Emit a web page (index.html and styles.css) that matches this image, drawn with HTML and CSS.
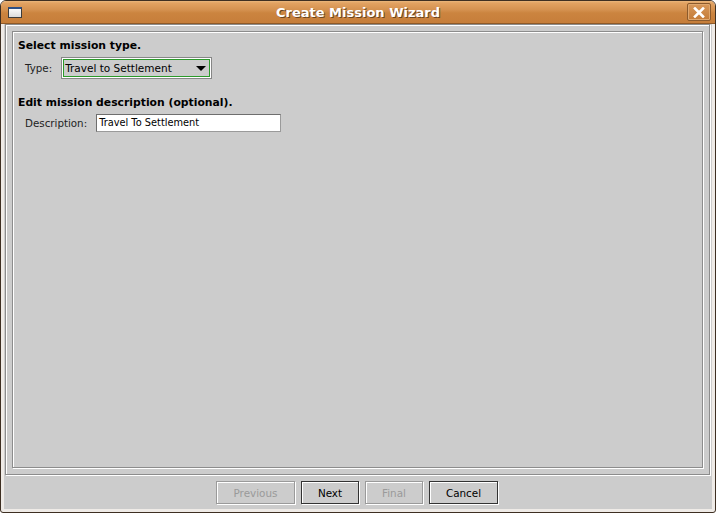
FILE: index.html
```html
<!DOCTYPE html>
<html>
<head>
<meta charset="utf-8">
<link rel="stylesheet" href="styles.css">
</head>
<body>
<div class="window">
  <div class="titlebar">
    <div class="winicon"></div>
    <div class="title">Create Mission Wizard</div>
    <div class="close">
      <svg width="12" height="11" viewBox="0 0 12 11"><path d="M2 1.5 L10 9.5 M10 1.5 L2 9.5" stroke="#ffffff" stroke-width="2.6" stroke-linecap="square"/></svg>
    </div>
  </div>
  <div class="frame">
    <div class="client">
      <div class="etched outer">
        <div class="etched inner">
          <div class="heading">Select mission type.</div>
          <div class="row row-type">
            <span class="label label-type">Type:</span>
            <div class="combo">
              <span class="combo-text">Travel to Settlement</span>
              <svg class="arrow" width="10" height="5" viewBox="0 0 10 5"><path d="M0 0 H10 L5 5 Z" fill="#000"/></svg>
            </div>
          </div>
          <div class="heading heading-2">Edit mission description (optional).</div>
          <div class="row row-desc">
            <span class="label label-desc">Description:</span>
            <div class="field">Travel To Settlement</div>
          </div>
        </div>
      </div>
      <div class="buttons">
        <div class="btn disabled btn-prev">Previous</div>
        <div class="btn btn-next">Next</div>
        <div class="btn disabled btn-final">Final</div>
        <div class="btn btn-cancel">Cancel</div>
      </div>
    </div>
  </div>
</div>
</body>
</html>
```
FILE: styles.css
```css
html, body {
  margin: 0;
  padding: 0;
  background: #ffffff;
}
body {
  width: 716px;
  height: 515px;
  overflow: hidden;
  font-family: "DejaVu Sans", "Liberation Sans", sans-serif;
}
.window {
  box-sizing: border-box;
  width: 716px;
  height: 513px;
  border: 1px solid #3e2f22;
  border-radius: 6px 6px 3px 3px;
  background: #efebe7;
  overflow: hidden;
  display: flex;
  flex-direction: column;
}
.titlebar {
  position: relative;
  height: 22px;
  flex: none;
  border-bottom: 1px solid #8f5a28;
  background: linear-gradient(to bottom, #eab77d 0px, #e2a262 2px, #d4914f 9px, #cb843f 12px, #c67e3a 22px);
  display: flex;
  align-items: center;
}
.winicon {
  box-sizing: border-box;
  width: 14px;
  height: 11px;
  margin-left: 7px;
  margin-top: 1px;
  border: 1px solid #3c3c3c;
  border-top: 2px solid #2c4f86;
  background: linear-gradient(to bottom, #fafafa, #dcdcdc);
}
.title {
  position: absolute;
  left: 0;
  right: 0;
  top: 0;
  height: 22px;
  line-height: 23px;
  text-align: center;
  color: #ffffff;
  font-weight: bold;
  font-size: 13px;
  text-shadow: 1px 1px 0 #6b4420;
}
.close {
  position: absolute;
  right: 4px;
  top: 2px;
  box-sizing: border-box;
  width: 24px;
  height: 18px;
  border: 1px solid #8b5a2c;
  border-radius: 2px;
  box-shadow: inset 0 0 0 1px #e0a86f;
  background: linear-gradient(to bottom, #d8985a, #c47c38);
  display: flex;
  align-items: center;
  justify-content: center;
}
.close svg {
  display: block;
}
.frame {
  flex: 1;
  display: flex;
  padding: 0 3px 3px 3px;
}
.client {
  flex: 1;
  background: #cccccc;
  display: flex;
  flex-direction: column;
}
.etched {
  box-sizing: border-box;
  border: 1px solid #8c8c8c;
  box-shadow: inset 1px 1px 0 #ffffff, 1px 1px 0 #ffffff;
}
.outer {
  flex: 1;
  margin: 0 2px 1px 1px;
  padding: 6px 5px 5px 6px;
  display: flex;
}
.inner {
  flex: 1;
  margin: 0 1px 1px 0;
  padding: 6px 5px 0 5px;
  display: flex;
  flex-direction: column;
  align-items: flex-start;
}
.heading {
  font-size: 10.8px;
  font-weight: bold;
  line-height: 15px;
  height: 15px;
  color: #000;
}
.heading-2 {
  margin-top: 16px;
}
.row {
  display: flex;
  align-items: center;
  padding-left: 6px;
}
.row-type {
  margin-top: 4px;
}
.row-desc {
  margin-top: 4px;
}
.label {
  font-size: 10.3px;
  color: #222;
}
.label-type {
  margin-left: 1px;
  margin-right: 9px;
}
.label-desc {
  margin-left: 1px;
  margin-right: 9px;
}
.combo {
  box-sizing: border-box;
  width: 151px;
  height: 22px;
  border: 1px solid #868686;
  box-shadow: inset 0 0 0 1px #ffffff, inset 0 0 0 2px #2a9a2a;
  background: #cccccc;
  display: flex;
  align-items: center;
  justify-content: space-between;
  padding: 0 5px 0 3px;
}
.combo-text {
  font-size: 10.5px;
  color: #000;
}
.arrow {
  display: block;
  margin-top: 1px;
}
.field {
  box-sizing: border-box;
  width: 185px;
  height: 18px;
  border: 1px solid #6e6e6e;
  border-right-color: #9a9a9a;
  border-bottom-color: #9a9a9a;
  background: #ffffff;
  font-size: 9.8px;
  line-height: 16px;
  padding-left: 2px;
  color: #000;
}
.buttons {
  height: 33px;
  box-sizing: border-box;
  padding-top: 5px;
  padding-right: 1px;
  display: flex;
  justify-content: center;
  align-items: flex-start;
  gap: 5px;
}
.btn {
  box-sizing: border-box;
  height: 23px;
  margin: 0 1px 1px 0;
  border: 1px solid #333333;
  box-shadow: inset 1px 1px 0 #ffffff, 1px 1px 0 #ffffff;
  font-size: 10.4px;
  color: #000;
  display: flex;
  align-items: center;
  justify-content: center;
}
.btn.disabled {
  border-color: #9a9a9a;
  color: #9a9a9a;
}
.btn-prev { width: 79px; }
.btn-next { width: 58px; }
.btn-final { width: 58px; }
.btn-cancel { width: 69px; }
```
